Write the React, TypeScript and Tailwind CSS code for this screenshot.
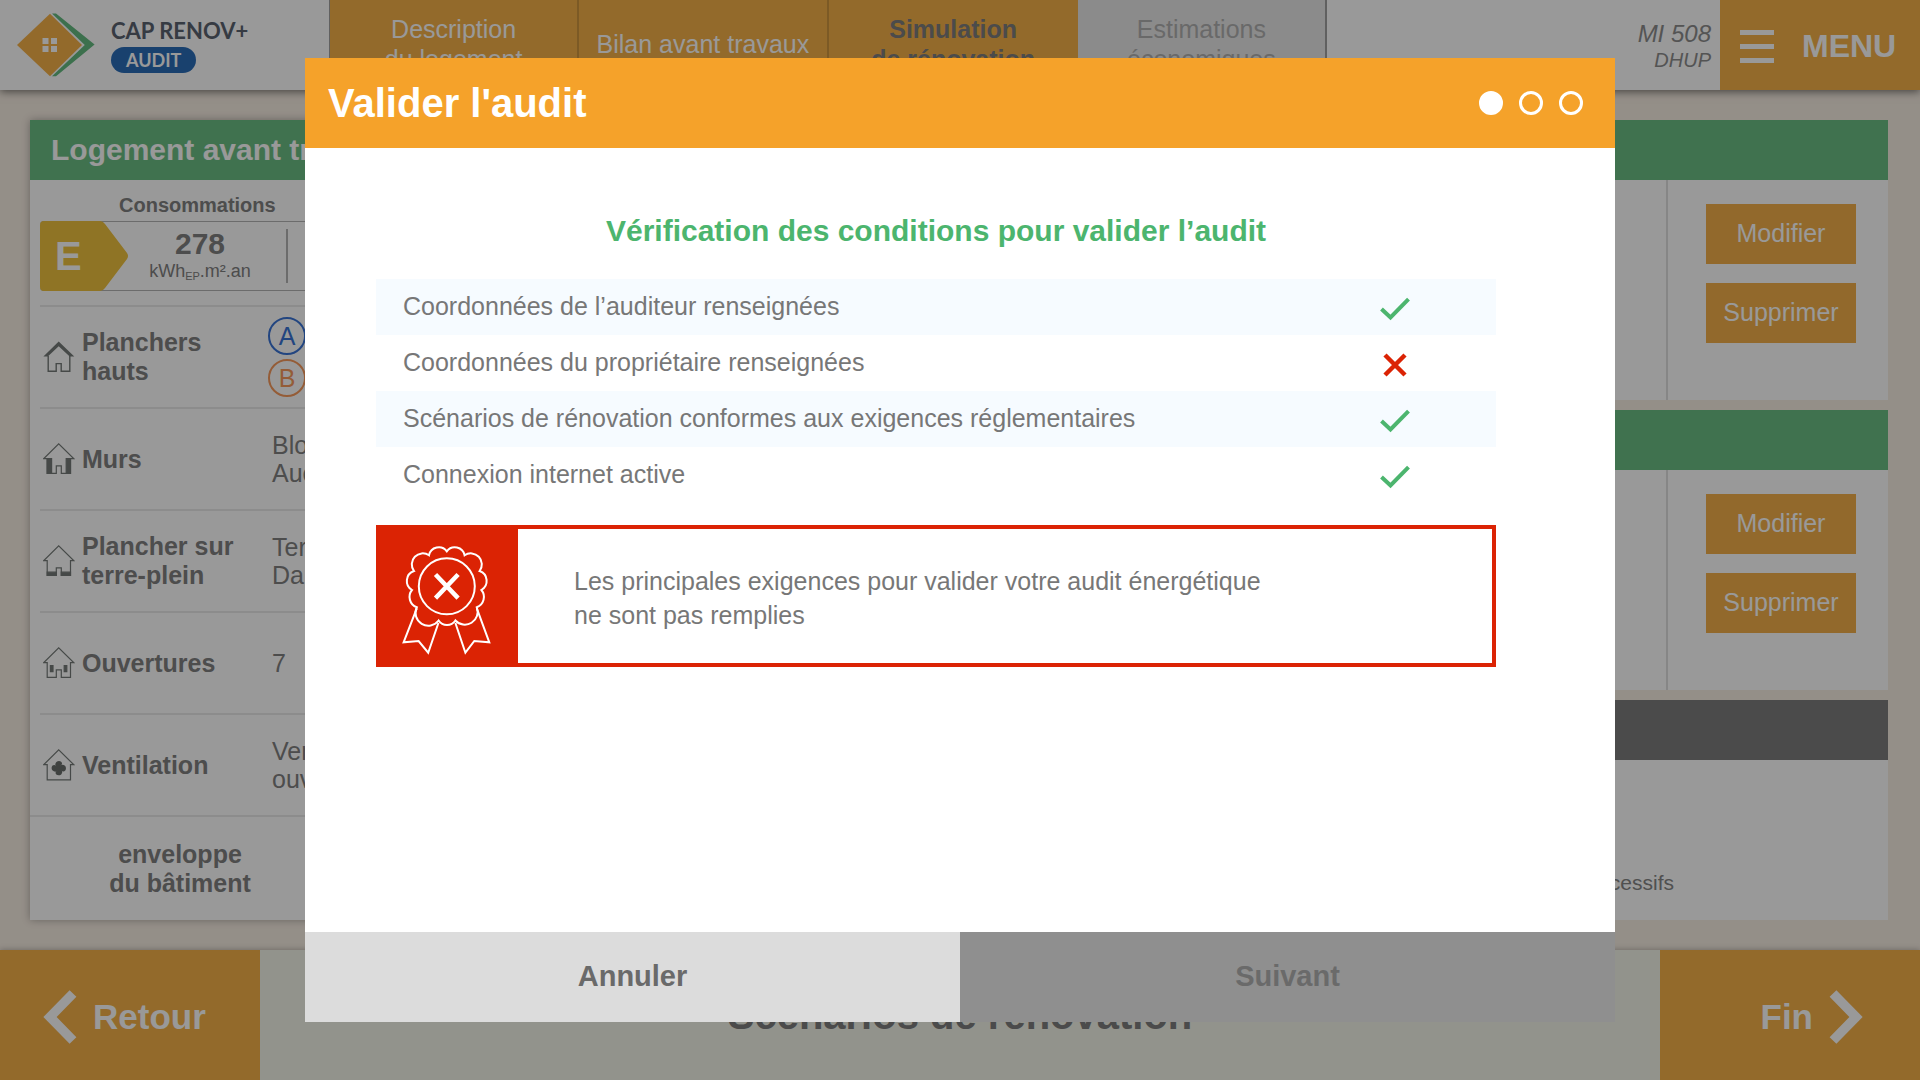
import React from 'react';

type IconKind = 'roof' | 'walls' | 'floor' | 'windows' | 'fan';

const HouseIcon = ({ kind }: { kind: IconKind }) => (
  <svg width="32" height="32" viewBox="0 0 32 32" fill="none" stroke="#757b78" strokeWidth="1.2" className="shrink-0" aria-hidden="true">
    {kind === 'roof' ? (
      <>
        <path d="M5.2 15v15.2h8v-7.6h5v7.6h8.6V15" strokeWidth="1.4" />
        <path d="M.4 15.6 15.7.6l15.6 15h-4.6L15.7 5.2 4.8 15.6z" fill="#757b78" stroke="none" />
      </>
    ) : (
      <path d={kind === 'fan' ? 'M4.2 30.8V15.6H.8L15.7.9l15 14.7h-3.2v15.2z' : 'M4.2 30.4V15.6H.8L15.7.9l15 14.7h-3.2v14.8h-9.2v-7.6h-5v7.6z'} />
    )}
    {kind === 'walls' && <path d="M4.2 15.6h4.4v14.8H4.2zM23.2 15.6h4.3v14.8h-4.3z" fill="#757b78" />}
    {kind === 'floor' && <path d="M4.2 27.2h9.1v3.2H4.2zM18.3 27.2h9.2v3.2h-9.2z" fill="#757b78" />}
    {kind === 'windows' && <path d="M7.4 18.6h2.6v6H7.4zM21.2 18.6h2.6v6h-2.6z" fill="#757b78" />}
    {kind === 'fan' && (
      <g fill="#6a6f6c" stroke="none">
        <path d="M15.8 19.6c-3.4-1-4.6-4.4-2.4-6.600 2.200-1.900 6-.8 5.600 1.800-.2 1.900-2.400 2-2 4.200z" />
        <path d="M15.400 19.200c1-3.400 4.400-4.600 6.600-2.400 1.900 2.200.8 6-1.800 5.600-1.900-.2-2-2.400-4.200-2z" />
        <path d="M15.800 18.800c3.400 1 4.600 4.400 2.400 6.600-2.200 1.900-6 .8-5.600-1.800.2-1.900 2.400-2 2-4.200z" />
        <path d="M16.200 19.200c-1 3.400-4.400 4.600-6.600 2.400-1.900-2.200-.8-6 1.800-5.600 1.900.2 2 2.400 4.200 2z" />
      </g>
    )}
  </svg>
);

const Logo = () => (
  <svg width="78" height="64" viewBox="0 0 78 64" aria-hidden="true">
    <path d="M33 .8 65 32 33 63.2 0 32z" fill="#f5b149" />
    <path d="M35 .6h4l38.600 31L39 63.2h-4L67.8 32z" fill="#64bb80" />
    <path d="M25.5 25h6v6h-6zM34 25h6v6h-6zM25.5 33h6v6h-6zM34 33h6v6h-6z" fill="#fff" />
  </svg>
);

const RibbonIcon = () => (
  <svg width="138" height="134" viewBox="4 4 138 134" fill="none" stroke="#fff" strokeWidth="2" className="shrink-0" aria-hidden="true">
    <path d="M70.8 26.3A10 10 0 0 1 88.6 30.3A11 11 0 0 1 103.6 46A10.5 10.5 0 0 1 105.4 65A11 11 0 0 1 100.8 82.3A12.8 12.8 0 0 1 79.4 95.5A10 10 0 0 1 62.6 95.5A12.8 12.8 0 0 1 40.8 82.3A11 11 0 0 1 36 65A10.5 10.5 0 0 1 38 46A11 11 0 0 1 53 30.3A10 10 0 0 1 70.8 26.3Z" />
    <circle cx="70.8" cy="61.3" r="28" />
    <path d="m59.5 49.5 22.6 23.6m0-23.6L59.5 73.1" strokeWidth="4.5" />
    <path d="M40.8 83.3 27.6 117.3l15-1.3 9.6 11.7L62.4 98M100.8 83.3l12.5 34-15-1.3-8.9 11.7L79.4 98" />
  </svg>
);

const CheckIcon = () => (
  <svg width="30" height="24" viewBox="0 0 30 24" fill="none" stroke="#4cb56e" strokeWidth="4" role="img" aria-label="Condition remplie">
    <path d="m1.5 12 9 8.5L28.5 2.2" />
  </svg>
);

const CrossIcon = () => (
  <svg width="24" height="24" viewBox="0 0 24 24" fill="none" stroke="#db2304" strokeWidth="4.5" role="img" aria-label="Condition non remplie">
    <path d="m2 2 20 20M22 2 2 22" />
  </svg>
);

const rows: { label: string; icon: IconKind; value: React.ReactNode }[] = [
  {
    label: 'Planchers\nhauts',
    icon: 'roof',
    value: (
      <span className="flex flex-col gap-1 -ml-1">
        <span className="flex size-[38px] items-center justify-center rounded-full border-2 border-[#3a74d6] text-[#3a74d6]">A</span>
        <span className="flex size-[38px] items-center justify-center rounded-full border-2 border-[#f79a5c] text-[#f79a5c]">B</span>
      </span>
    ),
  },
  { label: 'Murs', icon: 'walls', value: 'Bloc\nAucun' },
  { label: 'Plancher sur\nterre-plein', icon: 'floor', value: 'Terre\nDalle' },
  { label: 'Ouvertures', icon: 'windows', value: '7' },
  { label: 'Ventilation', icon: 'fan', value: 'Ventilation\nouverture' },
];

const conditions = [
  { label: 'Coordonnées de l’auditeur renseignées', ok: true },
  { label: 'Coordonnées du propriétaire renseignées', ok: false },
  { label: 'Scénarios de rénovation conformes aux exigences réglementaires', ok: true },
  { label: 'Connexion internet active', ok: true },
];

const Header = () => (
  <header className="relative z-10 flex h-[90px] bg-white shadow-[0_2px_8px_rgba(0,0,0,0.5)]">
    <a href="#" className="flex w-[329px] shrink-0 items-center gap-4 pl-[17px]">
      <Logo />
      <span className="flex flex-col items-start pb-[2px] font-[Lato,sans-serif] font-bold">
        <span className="text-[22px] leading-[32px] text-[#5a6370]">CAP RENOV+</span>
        <span className="rounded-full bg-[#2b6db8] px-[15px] text-[18px] leading-[26px] text-white">AUDIT</span>
      </span>
    </a>
    <nav className="grid w-[998px] shrink grid-cols-4 border-l border-[#a0a0a0] text-center text-[25px] leading-[30px] text-white">
      <a href="#" className="flex items-center justify-center border-r-2 border-[#cf963f] bg-[#f5b149] pb-[2px]">Description<br />du logement</a>
      <a href="#" className="flex items-center justify-center border-r-2 border-[#cf963f] bg-[#f5b149] pb-[2px]">Bilan avant travaux</a>
      <a href="#" className="flex items-center justify-center bg-[#f5b149] pb-[2px] font-bold text-[#7d7d7d]">Simulation<br />de rénovation</a>
      <a href="#" className="flex items-center justify-center border-r-2 border-[#a0a0a0] bg-[#e8e8e8] pb-[2px] text-[#b0b0b0]">Estimations<br />économiques</a>
    </nav>
    <div className="ml-auto flex flex-col items-end justify-center pr-[9px] pt-1 italic text-[#8c8c8c]">
      <span className="text-[24px] leading-[26px]">MI 508</span>
      <span className="text-[20px] leading-[26px]">DHUP</span>
    </div>
    <button className="flex w-[200px] shrink-0 items-center gap-7 bg-[#f5b149] pl-5 pt-[2px] text-[32px] font-bold text-white">
      <span className="flex w-[34px] flex-col gap-[9px]">
        <span className="h-[5px] bg-white" />
        <span className="h-[5px] bg-white" />
        <span className="h-[5px] bg-white" />
      </span>
      MENU
    </button>
  </header>
);

const HousingCard = () => (
  <section className="flex w-[480px] shrink-0 flex-col bg-white text-[#808080] shadow-[0_0_8px_rgba(0,0,0,0.3)]">
    <h2 className="bg-[#6cbe84] px-[21px] text-[30px] font-bold leading-[60px] text-white">Logement avant travaux</h2>
    <div className="ml-[10px] h-[125px] pt-[15px]">
      <h3 className="pl-[79px] text-[20px] font-bold leading-[20px]">Consommations</h3>
      <div className="mt-[6px] flex h-[70px] items-center rounded-l-sm border-y border-[#b4b4b4]">
        <div className="relative flex h-[70px] w-[88px] shrink-0 items-center pl-[15px] text-[40px] font-bold text-white">
          <svg width="88" height="70" viewBox="0 0 88 70" className="absolute inset-0" aria-hidden="true">
            <path d="M4 0h56q3 0 5 3l22 29q2 3 0 6L65 67q-2 3-5 3H4q-4 0-4-4V4q0-4 4-4z" fill="#eec13f" />
          </svg>
          <span className="relative">E</span>
        </div>
        <div className="flex w-[160px] flex-col items-center border-r-2 border-[#b4b4b4] pr-[14px]">
          <span className="text-[30px] font-bold leading-[30px]">278</span>
          <span className="text-[18px] leading-[24px]">kWh<sub className="text-[11px]">EP</sub>.m².an</span>
        </div>
      </div>
    </div>
    {rows.map(row => (
      <div key={row.label} className="ml-[10px] flex h-[102px] items-center border-t-2 border-[#e9e9e9] pl-[3px] text-[25px]">
        <HouseIcon kind={row.icon} />
        <span className="w-[197px] shrink-0 whitespace-pre-line pl-[7px] font-bold leading-[29px]">{row.label}</span>
        <span className="whitespace-pre-line leading-[28px]">{row.value}</span>
      </div>
    ))}
    <div className="flex flex-1 items-center border-t-2 border-[#e9e9e9] text-[25px] font-bold leading-[29px]">
      <p className="w-[300px] text-center">enveloppe<br />du bâtiment</p>
    </div>
  </section>
);

const ScenarioCard = () => (
  <section className="flex flex-col bg-white">
    <div className="h-[60px] bg-[#6cbe84]" />
    <div className="flex h-[220px] justify-end">
      <div className="flex w-[222px] flex-col gap-[19px] border-l-2 border-[#e0e0e0] pl-[38px] pt-6 text-[25px] text-white">
        <button className="h-[60px] w-[150px] bg-[#f3b04a]">Modifier</button>
        <button className="h-[60px] w-[150px] bg-[#f3b04a]">Supprimer</button>
      </div>
    </div>
  </section>
);

const ValidationDialog = () => (
  <div className="fixed inset-0 z-20 flex justify-center bg-black/40 py-[58px]">
    <div role="dialog" aria-modal="true" aria-labelledby="dialog-title" className="flex w-full max-w-[1310px] flex-col bg-white">
      <div className="flex h-[90px] shrink-0 items-center justify-between bg-[#f5a22a] pl-[23px] pr-8">
        <h1 id="dialog-title" className="text-[40px] font-bold text-white">Valider l'audit</h1>
        <div className="flex gap-4">
          <span className="size-6 rounded-full border-[3px] border-white bg-white" />
          <span className="size-6 rounded-full border-[3px] border-white" />
          <span className="size-6 rounded-full border-[3px] border-white" />
        </div>
      </div>

      <div className="flex-1 pl-[71px] pr-[119px] pt-[65px] text-[25px] text-[#777]">
        <h2 className="text-center text-[30px] font-bold leading-[36px] text-[#4cb56e]">Vérification des conditions pour valider l’audit</h2>
        <ul className="mt-[30px]">
          {conditions.map(c => (
            <li key={c.label} className="flex h-14 items-center justify-between pl-[27px] pr-[71px] odd:bg-[#f6fbff]">
              {c.label}
              <span className="flex w-[60px] justify-center pt-1">{c.ok ? <CheckIcon /> : <CrossIcon />}</span>
            </li>
          ))}
        </ul>
        <div className="mt-[22px] flex border-4 border-[#db2304]">
          <div className="bg-[#db2304]"><RibbonIcon /></div>
          <p className="self-center pl-14 pt-1 leading-[34px]">Les principales exigences pour valider votre audit énergétique<br />ne sont pas remplies</p>
        </div>
      </div>

      <div className="grid h-[90px] shrink-0 grid-cols-2 text-[29px] font-bold">
        <button className="bg-[#dcdcdc] text-[#6a6a6a]">Annuler</button>
        <button disabled className="bg-[#8f8f8f] text-[#6a6a6a]">Suivant</button>
      </div>
    </div>
  </div>
);

export default function App() {
  return (
    <div className="flex min-h-screen flex-col bg-[#f7eee3] font-['Liberation_Sans',Arial,sans-serif]">
      <Header />
      <main className="flex flex-1 gap-5 pb-[30px] pl-[30px] pr-8 pt-[30px]">
        <HousingCard />
        <div className="flex flex-1 flex-col gap-[10px]">
          <ScenarioCard />
          <ScenarioCard />
          <section className="flex flex-1 flex-col bg-white">
            <div className="h-[60px] bg-[#7d7d7d]" />
            <p className="mt-auto pb-[22px] pr-[214px] text-right text-[21px] text-[#858585]">successifs</p>
          </section>
        </div>
      </main>
      <footer className="flex h-[130px] items-stretch justify-between bg-[#f3f5e9] pt-0 font-bold shadow-[0_0_6px_rgba(0,0,0,0.3)]">
        <button className="flex w-[260px] items-center gap-4 bg-[#f5b149] pl-[43px] pt-1 text-[35px] text-white">
          <svg width="34" height="54" viewBox="0 0 34 54" fill="none" stroke="#fff" strokeWidth="9.5" aria-hidden="true"><path d="M30 3.5 7 27l23 23.5" /></svg>
          Retour
        </button>
        <h2 className="self-center text-[40px] text-[#7d7d7d]">Scénarios de rénovation</h2>
        <button className="flex w-[260px] items-center justify-end gap-4 bg-[#f5b149] pr-[57px] pt-1 text-[35px] text-white">
          Fin
          <svg width="34" height="54" viewBox="0 0 34 54" fill="none" stroke="#fff" strokeWidth="9.5" aria-hidden="true"><path d="m4 3.5 23 23.5L4 50.5" /></svg>
        </button>
      </footer>
      <ValidationDialog />
    </div>
  );
}
